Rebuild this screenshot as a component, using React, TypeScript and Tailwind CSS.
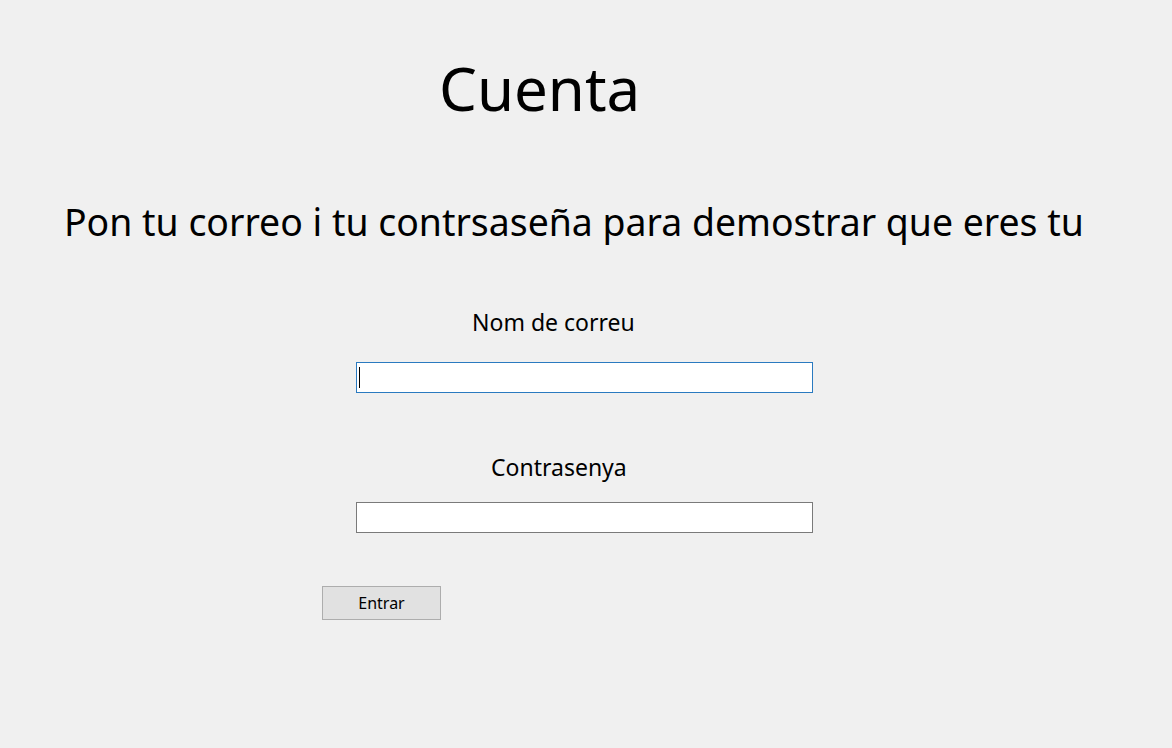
export default function App() {
  return (
    <div
      className="w-[1172px] h-[748px] overflow-hidden bg-[#f0f0f0] text-black"
      style={{ fontFamily: '"Noto Sans", "Open Sans", sans-serif' }}
    >
      {/* Title */}
      <h1 className="pt-[52px] pl-[439px] text-[60px] font-normal leading-[72px]">Cuenta</h1>

      {/* Subtitle */}
      <p className="mt-[76px] pl-[64px] text-[37.4px] leading-[44px] whitespace-nowrap">
        Pon tu correo i tu contrsaseña para demostrar que eres tu
      </p>

      <form className="flex flex-col" onSubmit={(e) => e.preventDefault()}>
        <label htmlFor="email" className="mt-[63px] pl-[472px] text-[23px] leading-[30px]">
          Nom de correu
        </label>
        <div className="relative mt-[25px] ml-[356px] w-[457px] h-[31px]">
          <input
            id="email"
            type="text"
            className="w-full h-full border border-[#2a7ac0] bg-white px-1 text-[16px] outline-none"
          />
          {/* caret */}
          <span className="pointer-events-none absolute left-[3px] top-[5px] h-[21px] w-px bg-black" />
        </div>

        <label htmlFor="pass" className="mt-[59px] pl-[491px] text-[23px] leading-[30px]">
          Contrasenya
        </label>
        <input
          id="pass"
          type="password"
          className="mt-[20px] ml-[356px] w-[457px] h-[31px] border border-[#7a7a7a] bg-white px-1 text-[16px] outline-none"
        />

        <button
          type="submit"
          className="mt-[53px] ml-[322px] w-[119px] h-[34px] border border-[#adadad] bg-[#e1e1e1] text-[16px] text-black"
        >
          Entrar
        </button>
      </form>
    </div>
  );
}
